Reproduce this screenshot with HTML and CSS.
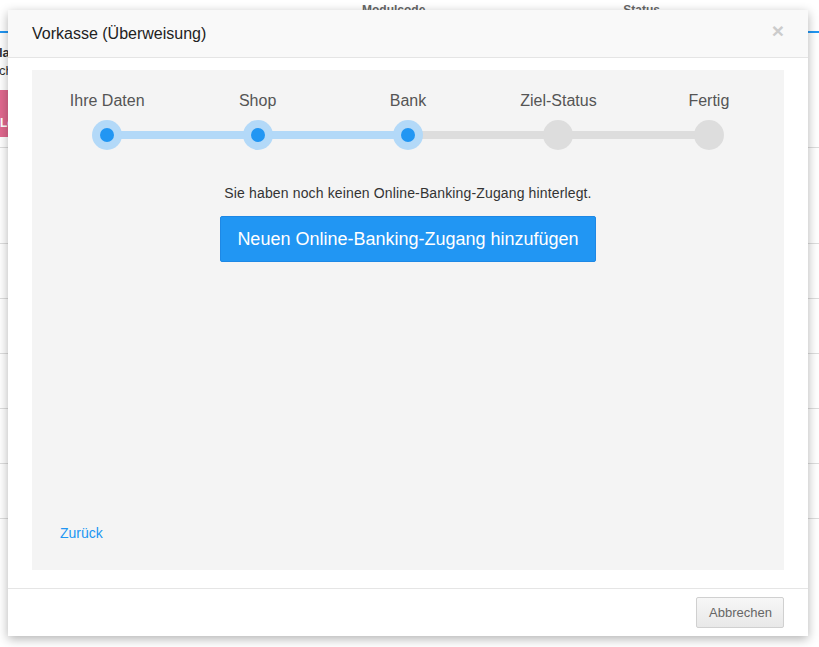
FILE: index.html
```html
<!DOCTYPE html>
<html lang="de">
<head>
    <meta charset="UTF-8">
    <meta name="viewport" content="width=device-width, initial-scale=1.0">
    <title>Vorkasse (Überweisung)</title>
    <link rel="stylesheet" href="styles.css">
</head>
<body>
    <div class="page">
        <div class="page-head">
            <span class="col-code">Modulcode</span>
            <span class="col-status">Status</span>
        </div>
        <div class="page-row row-first">
            <div class="cell-name"><b>la</b><br>ch</div>
            <div class="btn-delete">Le</div>
        </div>
        <div class="page-row row-second"></div>
        <div class="page-row"></div>
        <div class="page-row"></div>
        <div class="page-row"></div>
        <div class="page-row"></div>
        <div class="page-row"></div>
    </div>

    <div class="modal">
        <div class="modal-header">
            <h4 class="modal-title">Vorkasse (Überweisung)</h4>
            <button type="button" class="close">&times;</button>
        </div>
        <div class="modal-body">
            <div class="wizard">
                <ol class="steps">
                    <li class="step done"><span class="step-label">Ihre Daten</span><span class="step-dot"></span></li>
                    <li class="step done"><span class="step-label">Shop</span><span class="step-dot"></span></li>
                    <li class="step done"><span class="step-label">Bank</span><span class="step-dot"></span></li>
                    <li class="step"><span class="step-label">Ziel-Status</span><span class="step-dot"></span></li>
                    <li class="step"><span class="step-label">Fertig</span><span class="step-dot"></span></li>
                </ol>
                <p class="notice">Sie haben noch keinen Online-Banking-Zugang hinterlegt.</p>
                <button type="button" class="btn btn-primary">Neuen Online-Banking-Zugang hinzufügen</button>
                <a href="#" class="back">Zurück</a>
            </div>
        </div>
        <div class="modal-footer">
            <button type="button" class="btn btn-default">Abbrechen</button>
        </div>
    </div>
</body>
</html>
```

FILE: styles.css
```css
body {
    margin: 0;
    font-family: "Liberation Sans", Arial, Helvetica, sans-serif;
    font-size: 14px;
    color: #333;
    background: #fff;
}
.page {
    width: 819px;
    height: 647px;
    overflow: hidden;
}
.page-head {
    height: 31px;
    border-bottom: 2px solid #2196f3;
    display: flex;
    font-size: 12px;
    font-weight: bold;
    color: #666;
}
.col-code {
    margin: 3px 0 0 362px;
}
.col-status {
    margin: 3px 0 0 198px;
}
.page-row {
    height: 54px;
    border-bottom: 1px solid #ddd;
}
.row-first {
    height: 115px;
    padding-top: 11px;
    box-sizing: border-box;
}
.row-second {
    height: 95px;
}
.cell-name {
    margin-left: -1px;
    font-size: 13px;
    line-height: 18px;
    color: #333;
}
.btn-delete {
    margin-top: 10px;
    width: 40px;
    height: 47px;
    background: #e0688e;
    color: #fff;
    font-size: 12px;
    font-weight: bold;
    display: flex;
    align-items: flex-end;
    padding: 0 0 7px 0;
    box-sizing: border-box;
}

.modal {
    position: absolute;
    left: 8px;
    top: 10px;
    width: 800px;
    background: #fff;
    box-shadow: 0 3px 10px rgba(0, 0, 0, 0.3);
}
.modal-header {
    display: flex;
    align-items: center;
    justify-content: space-between;
    height: 47px;
    padding: 0 24px;
    background: #f9f9f9;
    border-bottom: 1px solid #e5e5e5;
}
.modal-title {
    margin: 0;
    font-size: 16px;
    font-weight: normal;
    color: #222;
}
.close {
    border: none;
    background: none;
    padding: 0;
    font-family: inherit;
    font-size: 21px;
    font-weight: bold;
    line-height: 1;
    color: #ccc;
    margin-top: -6px;
    cursor: pointer;
}
.modal-body {
    padding: 12px 24px 18px;
}
.wizard {
    height: 500px;
    background: #f4f4f4;
    display: flex;
    flex-direction: column;
    align-items: center;
    box-sizing: border-box;
    padding: 21px 0 27px;
}
.steps {
    list-style: none;
    margin: 0;
    padding: 0;
    display: flex;
    width: 100%;
}
.step {
    flex: 1;
    position: relative;
    display: flex;
    flex-direction: column;
    align-items: center;
}
.step-label {
    font-size: 16px;
    line-height: 20px;
    color: #555;
}
.step-dot {
    position: relative;
    z-index: 1;
    margin-top: 9px;
    width: 30px;
    height: 30px;
    border-radius: 50%;
    background: #ddd;
}
.step.done .step-dot {
    background: #b3d9f8;
}
.step.done .step-dot::after {
    content: "";
    position: absolute;
    left: 8px;
    top: 8px;
    width: 14px;
    height: 14px;
    border-radius: 50%;
    background: #2196f3;
}
.step + .step::before {
    content: "";
    position: absolute;
    top: 40px;
    left: -50%;
    right: 50%;
    height: 8px;
    background: #ddd;
}
.step.done + .step.done::before {
    background: #b3d9f8;
}
.notice {
    margin: 33px 0 0;
    line-height: 20px;
    letter-spacing: 0.14px;
}
.btn {
    font-family: inherit;
    cursor: pointer;
}
.btn-primary {
    margin-top: 13px;
    padding: 10px 16px;
    font-size: 18px;
    line-height: 24px;
    color: #fff;
    background: #2196f3;
    border: 1px solid #1e88e5;
    border-radius: 2px;
}
.back {
    margin-top: auto;
    align-self: flex-start;
    margin-left: 28px;
    line-height: 20px;
    color: #2196f3;
    text-decoration: none;
}
.modal-footer {
    display: flex;
    justify-content: flex-end;
    padding: 8px 24px;
    border-top: 1px solid #e5e5e5;
}
.btn-default {
    padding: 6px 11px 6px 12px;
    font-size: 13px;
    line-height: 17px;
    color: #666;
    background: linear-gradient(#f7f7f7, #e8e8e8);
    border: 1px solid #d0d0d0;
    border-radius: 2px;
}
```
